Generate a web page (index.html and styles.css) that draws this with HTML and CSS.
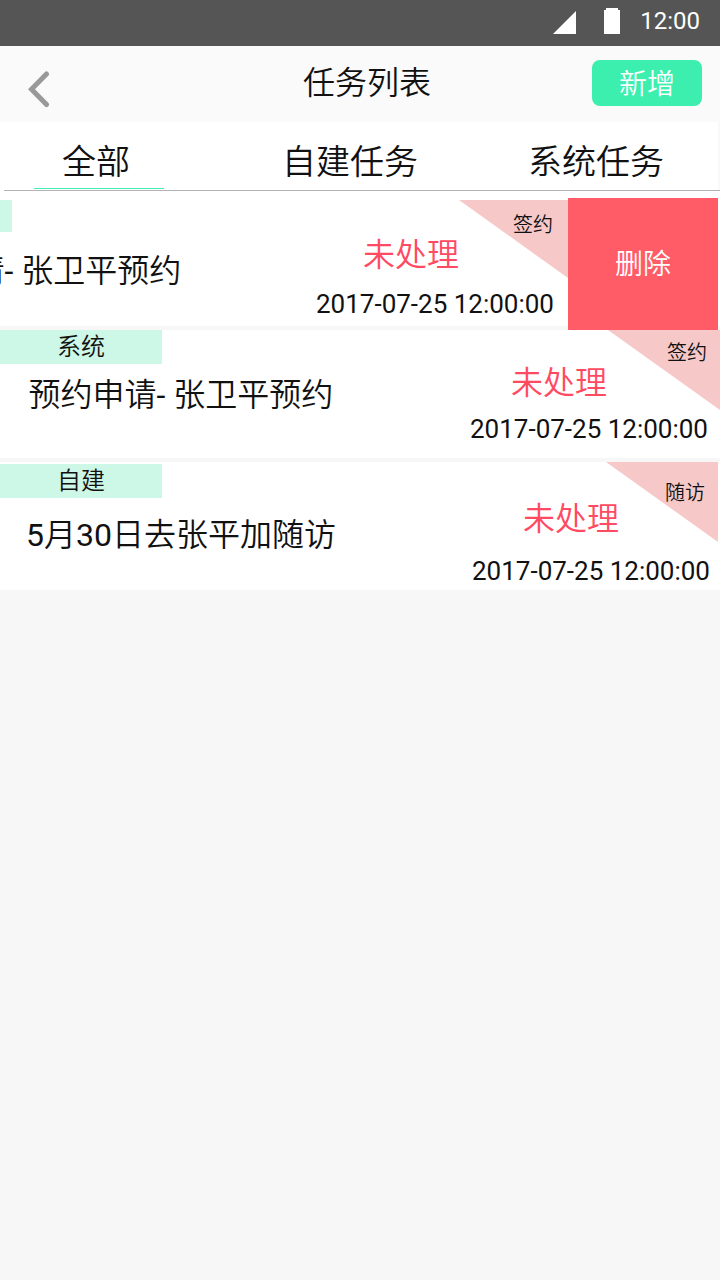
FILE: index.html
```html
<!DOCTYPE html>
<html lang="zh-CN">
<head>
<meta charset="utf-8">
<title>任务列表</title>
<link rel="stylesheet" href="styles.css">
</head>
<body>
<div class="statusbar">
  <svg class="signal" width="23" height="23" viewBox="0 0 23 23"><path d="M0 23L23 0V23Z" fill="#fff"/></svg>
  <svg class="battery" width="16" height="26" viewBox="0 0 16 26"><path d="M0 2H2V0H14V2H16V26H0Z" fill="#fff"/></svg>
  <span class="clock">12:00</span>
</div>
<header class="header">
  <svg class="back" width="24" height="38" viewBox="0 0 24 38"><path d="M20.5 4L5.5 19.2L20.5 34.5" fill="none" stroke="#999" stroke-width="5" stroke-linejoin="miter" stroke-linecap="round"/></svg>
  <h1 class="title">任务列表</h1>
  <button class="add">新增</button>
</header>
<nav class="tabs">
  <a class="tab tab-all active">全部</a>
  <a class="tab tab-own">自建任务</a>
  <a class="tab tab-system">系统任务</a>
</nav>
<main class="list">
  <article class="row row-swiped">
    <div class="content">
      <div class="left">
        <span class="tag"></span>
        <p class="name">预约申请<span class="latin">- </span>张卫平预约</p>
      </div>
      <div class="right">
        <p class="state">未处理</p>
        <p class="date">2017-07-25 12:00:00</p>
      </div>
      <div class="corner"><span>签约</span></div>
    </div>
    <button class="delete">删除</button>
  </article>
  <article class="row row-system">
    <div class="content">
      <div class="left">
        <span class="tag">系统</span>
        <p class="name">预约申请<span class="latin">- </span>张卫平预约</p>
      </div>
      <div class="right">
        <p class="state">未处理</p>
        <p class="date">2017-07-25 12:00:00</p>
      </div>
      <div class="corner"><span>签约</span></div>
    </div>
  </article>
  <article class="row row-own">
    <div class="content">
      <div class="left">
        <span class="tag">自建</span>
        <p class="name"><span class="latin">5</span>月<span class="latin">30</span>日去张平加随访</p>
      </div>
      <div class="right">
        <p class="state">未处理</p>
        <p class="date">2017-07-25 12:00:00</p>
      </div>
      <div class="corner"><span>随访</span></div>
    </div>
  </article>
</main>
</body>
</html>
```
FILE: styles.css
```css
* { box-sizing: border-box; }
body {
  margin: 0;
  width: 720px;
  height: 1280px;
  overflow: hidden;
  background: #f7f7f7;
  color: #111;
  font-family: Roboto, "Noto Sans CJK SC DemiLight", "Noto Sans CJK SC", sans-serif;
  font-weight: 350;
}
h1, p { margin: 0; font-weight: 350; }
button { border: 0; padding: 0; font: inherit; font-weight: 300; color: #fff; }
.latin { font-weight: 400; }

.statusbar {
  height: 46px;
  display: flex;
  justify-content: flex-end;
  align-items: flex-start;
  padding-right: 20px;
  background: #555;
  color: #fff;
}
.signal { margin: 11px 28px 0 0; }
.battery { margin: 8px 20px 0 0; }
.clock { font-size: 24px; line-height: 42px; font-weight: 400; }

.header {
  height: 76px;
  display: grid;
  grid-template-columns: 140px 1fr 128px;
  background: #fafafa;
}
.back { margin: 24px 0 0 26px; }
.title { font-size: 32px; line-height: 74px; padding-left: 163px; }
.add {
  width: 110px;
  height: 46px;
  margin-top: 14px;
  padding-top: 4px;
  border-radius: 8px;
  background: #3cefae;
  font-size: 28px;
  line-height: 42px;
}

.tabs {
  height: 69px;
  display: flex;
  background:
    linear-gradient(#b2b2b2, #b2b2b2) 4px 68px / 716px 1px no-repeat,
    linear-gradient(#f9f9f9, #f9f9f9) 718px 0 / 2px 69px no-repeat,
    #fff;
  font-size: 34px;
  line-height: 80px;
}
.tab { height: 67px; text-align: center; }
.tab-all { width: 130px; margin-left: 34px; padding-right: 6px; }
.tab-own { width: 140px; margin-left: 116px; }
.tab-system { width: 140px; margin-left: 106px; }
.active { border-bottom: 1px solid #3cefae; }

.list { display: flex; flex-direction: column; gap: 4px; }
.row { height: 128px; background: #fff; }
.content {
  position: relative;
  width: 720px;
  height: 100%;
  display: flex;
  justify-content: space-between;
}
.tag {
  display: block;
  width: 162px;
  height: 34px;
  background: #cdf7e6;
  font-size: 24px;
  line-height: 34px;
  text-align: center;
}
.name { font-size: 32px; line-height: 40px; padding-left: 28.5px; white-space: pre; }
.state { font-size: 32px; line-height: 40px; color: #ff4a62; padding-left: 41px; }
.date { font-size: 26px; line-height: 32px; font-weight: 400; }
.corner {
  position: absolute;
  top: 0;
  right: 0;
  width: 112px;
  height: 80px;
  background: #f6c8c8;
  clip-path: polygon(0 0, 100% 0, 100% 100%);
  font-size: 20px;
  line-height: 24px;
  text-align: right;
}

.row-swiped { height: 135px; display: flex; justify-content: flex-end; }
.row-swiped .content { flex: none; height: 126px; margin-top: 9px; }
.row-swiped .tag { width: 164px; height: 32px; }
.row-swiped .name { margin-top: 19px; }
.row-swiped .right { padding: 35px 14px 0 0; }
.row-swiped .state { padding-left: 47px; }
.row-swiped .date { margin-top: 13px; }
.row-swiped .corner { padding: 13px 15px 0 0; width: 109px; height: 78px; }
.delete {
  flex: none;
  width: 150px;
  height: 132px;
  margin: 7px 2px 0 0;
  padding-bottom: 4px;
  background: #ff5c67;
  font-size: 28px;
}

.row-system .name { margin-top: 11px; }
.row-system .right { padding: 33px 12px 0 0; }
.row-system .date { margin-top: 10px; }
.row-system .corner { padding: 11px 13px 0 0; }

.row-own .tag { margin-top: 2px; }
.row-own .name { margin-top: 17px; padding-left: 26px; }
.row-own .right { padding: 37px 10px 0 0; }
.row-own .state { padding-left: 51px; }
.row-own .date { margin-top: 16px; }
.row-own .corner { right: 2px; padding: 19px 13px 0 0; }
```
